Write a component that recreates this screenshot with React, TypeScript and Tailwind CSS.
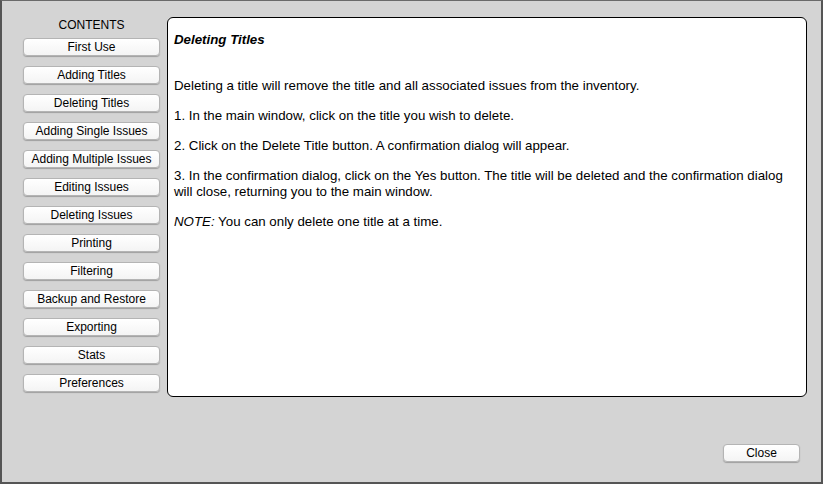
import React from "react";

const items = [
  "First Use",
  "Adding Titles",
  "Deleting Titles",
  "Adding Single Issues",
  "Adding Multiple Issues",
  "Editing Issues",
  "Deleting Issues",
  "Printing",
  "Filtering",
  "Backup and Restore",
  "Exporting",
  "Stats",
  "Preferences",
];

function Btn({ label, w }: { label: string; w: string }) {
  return (
    <div
      className={`${w} h-[18px] flex items-center justify-center rounded-[4px] bg-gradient-to-b from-white to-[#f4f4f4] border border-[#b4b4b4] shadow-[0_1px_1px_rgba(0,0,0,0.25)] text-[12px] leading-none text-black`}
    >
      {label}
    </div>
  );
}

export default function App() {
  return (
    <div
      className="w-[823px] h-[484px] bg-[#d4d4d4] border-t border-b-2 border-l-2 border-r-2 border-t-[#6a6a6a] border-[#555] flex flex-col overflow-hidden"
      style={{ fontFamily: '"Liberation Sans", Arial, sans-serif' }}
    >
      <div className="flex pt-[16px] pl-[21px]">
        <div className="w-[137px] flex flex-col items-center">
          <div className="text-[12px] leading-none h-[14px] mt-[2px] text-black">CONTENTS</div>
          <div className="flex flex-col gap-[10px] mt-[5px]">
            {items.map((t) => (
              <Btn key={t} label={t} w="w-[137px]" />
            ))}
          </div>
        </div>
        <div className="ml-[7px] w-[640px] h-[380px] bg-white border border-black rounded-[6px] px-[6px] pt-[14px] text-[13.3px] leading-[16px] text-black">
          <div className="font-bold italic">Deleting Titles</div>
          <p className="mt-[30px]">Deleting a title will remove the title and all associated issues from the inventory.</p>
          <p className="mt-[14px]">1. In the main window, click on the title you wish to delete.</p>
          <p className="mt-[14px]">2. Click on the Delete Title button. A confirmation dialog will appear.</p>
          <p className="mt-[14px]">
            3. In the confirmation dialog, click on the Yes button. The title will be deleted and the confirmation dialog will close, returning you to the main window.
          </p>
          <p className="mt-[14px]">
            <i>NOTE:</i> You can only delete one title at a time.
          </p>
        </div>
      </div>
      <div className="flex justify-end pr-[21px] mt-[47px]">
        <Btn label="Close" w="w-[77px]" />
      </div>
    </div>
  );
}
